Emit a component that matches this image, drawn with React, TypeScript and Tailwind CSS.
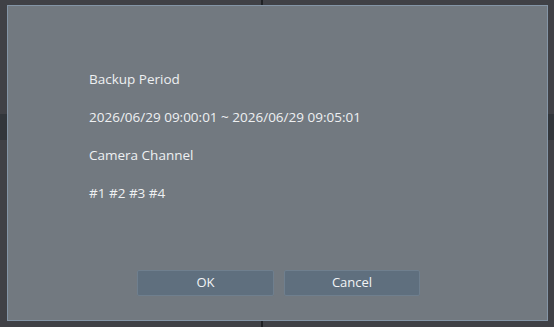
import React from 'react';

const lines = [
  'Backup Period',
  '2026/06/29 09:00:01 ~ 2026/06/29 09:05:01',
  'Camera Channel',
  '#1 #2 #3 #4',
];

export default function App() {
  return (
    <div className="relative w-[554px] h-[327px] overflow-hidden bg-[#404146] font-['Open_Sans','Noto_Sans',sans-serif]">
      {/* background panels behind the dialog */}
      <div className="flex flex-col h-full">
        <div className="flex h-[114px]">
          <div className="w-[261px]" />
          <div className="w-[2px] bg-[#1f2124]" />
          <div className="flex-1" />
        </div>
        <div className="h-[26px] bg-[#32363b]" />
        <div className="flex flex-1">
          <div className="w-[261px]" />
          <div className="w-[2px] bg-[#1f2124]" />
          <div className="flex-1" />
        </div>
      </div>

      {/* backup confirm dialog */}
      <div className="absolute left-[7px] top-[5px] w-[541px] h-[316px] bg-[#727980] border border-[#8495a6] flex flex-col">
        <div className="pl-[81px] pt-[54px] flex-1">
          {lines.map((t) => (
            <p key={t} className="h-[38px] leading-[38px] text-[13.5px] text-[#eef0f2]">
              {t}
            </p>
          ))}
        </div>
        <div className="flex justify-center gap-[10px] pb-[24px] pl-[2px]">
          <button className="w-[137px] h-[26px] bg-[#5f6f7e] border border-[#6f7f8e] rounded-[2px] text-[13px] text-[#f2f4f6]">
            OK
          </button>
          <button className="w-[136px] h-[26px] bg-[#5f6f7e] border border-[#6f7f8e] rounded-[2px] text-[13px] text-[#f2f4f6]">
            Cancel
          </button>
        </div>
      </div>
    </div>
  );
}
